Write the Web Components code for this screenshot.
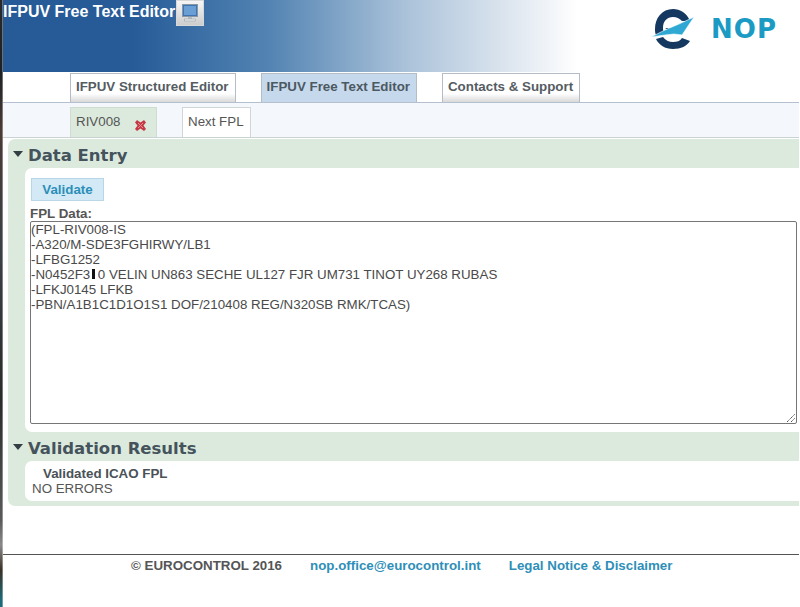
<!DOCTYPE html>
<html><head><meta charset="utf-8"><title>IFPUV Free Text Editor</title>
<style>
html,body{margin:0;padding:0;background:#fff;height:607px;overflow:hidden}
body{font-family:"Liberation Sans",Arial,sans-serif;color:#444;display:flex;flex-direction:row}
</style></head><body>
<desk-edge></desk-edge>
<app-page>
<app-header title-text="IFPUV Free Text Editor"></app-header>
<tab-row>
 <tab-item>IFPUV Structured Editor</tab-item>
 <tab-item active>IFPUV Free Text Editor</tab-item>
 <tab-item>Contacts &amp; Support</tab-item>
</tab-row>
<fpl-row></fpl-row>
<green-panel>
 <panel-section heading="Data Entry" kind="entry">
  <entry-form></entry-form>
 </panel-section>
 <panel-section heading="Validation Results" kind="results">
  <div style="font:bold 13.33px/15px 'Liberation Sans',sans-serif;color:#4a5257;padding-left:11px">Validated ICAO FPL</div>
  <div style="font:13.33px/15px 'Liberation Sans',sans-serif;color:#555">NO ERRORS</div>
 </panel-section>
</green-panel>
<app-footer></app-footer>
</app-page>
<script>
function def(name,html,init){
 customElements.define(name,class extends HTMLElement{
  constructor(){super();const r=this.attachShadow({mode:'open'});r.innerHTML=typeof html==='function'?html(this):html;}
  connectedCallback(){if(init)init(this,this.shadowRoot);}
 });
}
def('desk-edge',`<style>:host{display:block;width:3px;height:607px;flex:none;background:linear-gradient(#2a2a2a 0,#1d2226 72px,#4a3a34 130px,#3a4146 250px,#2b2b2b 400px,#5a5a5a 520px,#8a8a8a 545px,#3a3128 570px,#1d6a78 600px);
 box-shadow:inset -1px 0 0 rgba(255,255,255,.35)}</style>`);
def('app-page',`<style>:host{display:flex;flex-direction:column;flex:1;min-width:0;height:607px;padding-right:1px;box-sizing:border-box}</style><slot></slot>`);
def('app-header',`<style>
:host{display:flex;height:72px;flex:none;background:linear-gradient(90deg,#265b98 0,#265b98 130px,#5283b2 265px,#a9c1d9 400px,#dfe7f0 510px,#ffffff 575px);justify-content:space-between}
.l{display:flex;align-items:flex-start;height:26px}
h1{margin:0;font:bold 16px/24px "Liberation Sans",sans-serif;color:#fff;white-space:nowrap}
.ic{width:28px;height:26px;margin-left:1px;background:linear-gradient(#f6f6f6,#cdcdcd);border:1px solid #d8d8d8;box-sizing:border-box;display:flex;align-items:center;justify-content:center}
.logo{display:flex;align-items:flex-start;margin:8px 23px 0 0;height:44px;gap:15px}
.nop{font:bold 26px/30px "DejaVu Sans",sans-serif;color:#1b9bc4;margin-top:6px;letter-spacing:1px;margin-right:-1px}
</style>
<div class="l"><h1>IFPUV Free Text Editor</h1><div class="ic"><svg width="20" height="20" viewBox="0 0 20 20"><rect x="2.500" y="1.500" width="15" height="12" fill="#3d74b4" stroke="#8a98a6"/><rect x="4" y="3" width="12" height="9" fill="#6a9fd6"/><rect x="8" y="14" width="4" height="2" fill="#b5bcc4"/><rect x="4.500" y="16" width="11" height="2" fill="#e8eaec" stroke="#9aa3ab" stroke-width=".6"/></svg></div></div>
<div class="logo"><svg width="45" height="42" viewBox="0 0 45 42">
<path d="M39 13C36 5 29 1 22 1 11 1 4 10 4 21c0 2 0 4 1 6l8-3c-1-1-1-3-1-4 0-7 4-11 10-11 4 0 7 2 9 4z" fill="#14385f"/>
<path d="M12 29c2 3 6 5 10 5 4 0 7-1 9-4l8 3c-3 5-9 8-17 8-8 0-14-4-17-10z" fill="#14385f"/>
<path d="M14 20h18l-9 5z" fill="#14385f"/>
<path d="M43 9 31 27 23 26 14 27 0 29 14 22 28 16z" fill="#2fa9d3" stroke="#fff" stroke-width=".6"/>
</svg><span class="nop">NOP</span></div>`);
def('tab-row',`<style>:host{display:flex;flex:none;height:31px;padding:1px 0 0 67px;gap:25px;box-sizing:border-box;border-bottom:1px solid #b4c0cf}</style><slot></slot>`);
def('tab-item',`<style>
:host{display:block;height:29px;box-sizing:border-box;border:1px solid #b4bcc6;border-bottom:0;padding:0 6px 0 5px;font:bold 13.33px/25px "Liberation Sans",sans-serif;color:#555c62;white-space:nowrap;background:linear-gradient(#fff 0,#fff 70%,#d9d9d9 100%)}
:host([active]){background:#c5d8ec;color:#4c5862}
</style><slot></slot>`);
def('fpl-row',`<style>
:host{display:flex;flex:none;height:35px;background:#f4f7fc;border-bottom:1px solid #c9d4d2;box-sizing:border-box;padding:4px 0 0 67px;gap:25px}
.t{height:30px;box-sizing:border-box;font:13.33px/27px "Liberation Sans",sans-serif;color:#555}
.a{width:87px;background:#dceadd;border:1px solid #cfdccf;border-bottom:0;padding-left:5px;display:flex;gap:14px}
.b{width:69px;background:#fff;border:1px solid #cfd6d6;border-bottom:0;padding-left:5px}
svg{margin-top:11px}
</style><div class="t a"><span>RIV008</span><svg width="13" height="13" viewBox="0 0 13 13"><path d="M3 1l3.500 2.500L10 1l2 2.500L9.500 6.500 12 10l-2 2-3.500-2.500L3 12l-2-2 2.500-3.500L1 3.500z" fill="#c43a44"/><path d="M4 4l5 5M9 4l-5 5" stroke="#e98a90" stroke-width="1"/></svg></div><div class="t b">Next FPL</div>`);
def('green-panel',`<style>:host{display:block;flex:none;margin:1px 0 0 5px;background:#dceadd;border-radius:7px 0 0 7px;padding-bottom:5px;height:367px;box-sizing:border-box}</style><slot></slot>`);
def('panel-section',(h)=>`<style>
:host{display:block}
.h{display:flex;align-items:center;height:29px;padding-left:5px}
.h i{width:0;height:0;border:5.500px solid transparent;border-top:6px solid #333d44;border-bottom:0;margin-right:5px}
h2{margin:0;font:bold 16.5px/33px "DejaVu Sans",sans-serif;color:#45535c;white-space:nowrap;height:29px}
.c{margin-left:17px;background:#fff;border-radius:7px 0 0 7px;box-sizing:border-box}
:host([kind=entry]) .c{height:264px;padding:10px 0 0 5px}
:host([kind=results]) .c{height:40px;padding:5px 0 0 7px}
</style><div class="h"><i></i><h2>${h.getAttribute('heading')}</h2></div><div class="c"><slot></slot></div>`);
def('entry-form',`<style>
:host{display:block}
.v{width:73px;height:23px;margin-left:1px;box-sizing:border-box;background:#d3e9f6;border:1px solid #b9d6e6;font:bold 13.33px/21px "Liberation Sans",sans-serif;color:#2b8fb8;text-align:center}
.v u{text-decoration:underline;text-underline-offset:1px}
label{display:block;font:bold 13.33px/15px "Liberation Sans",sans-serif;color:#555;margin-top:5px}
.ta{position:relative;width:767px;height:203px;box-sizing:border-box;border:1px solid #767676;border-radius:2px;font:13.33px/15px "Liberation Sans",sans-serif;color:#4a4a4a;white-space:pre;overflow:hidden}
.car{display:inline-block;width:3px;height:10px;background:#111;margin:0 2.500px 0 2px}
.grip{position:absolute;right:0;bottom:0}
</style><div class="v">Val<u>i</u>date</div><label>FPL Data:</label>
<div class="ta"><div>(FPL-RIV008-IS</div><div>-A320/M-SDE3FGHIRWY/LB1</div><div>-LFBG1252</div><div><span>-N0452F3</span><span class="car"></span><span>0 VELIN UN863 SECHE UL127 FJR UM731 TINOT UY268 RUBAS</span></div><div>-LFKJ0145 LFKB</div><div>-PBN/A1B1C1D1O1S1 DOF/210408 REG/N320SB RMK/TCAS)</div><svg class="grip" width="11" height="11" viewBox="0 0 11 11"><path d="M2 10L10 2M6 10l4-4" stroke="#555" stroke-width="1" stroke-dasharray="1.400 .5" fill="none"/></svg></div>`);
def('app-footer',`<style>
:host{display:block;flex:none;margin-top:48px;border-top:1px solid #555;height:52px;box-sizing:border-box;padding:3px 0 0 128px}
.r{display:flex;font:bold 13.33px/16px "Liberation Sans",sans-serif;color:#555;white-space:nowrap}
.a{color:#2f8fb8;margin-left:28px}
</style><div class="r"><span>© EUROCONTROL 2016</span><span class="a">nop.office@eurocontrol.int</span><span class="a">Legal Notice &amp; Disclaimer</span></div>`);
</script>
</body></html>
